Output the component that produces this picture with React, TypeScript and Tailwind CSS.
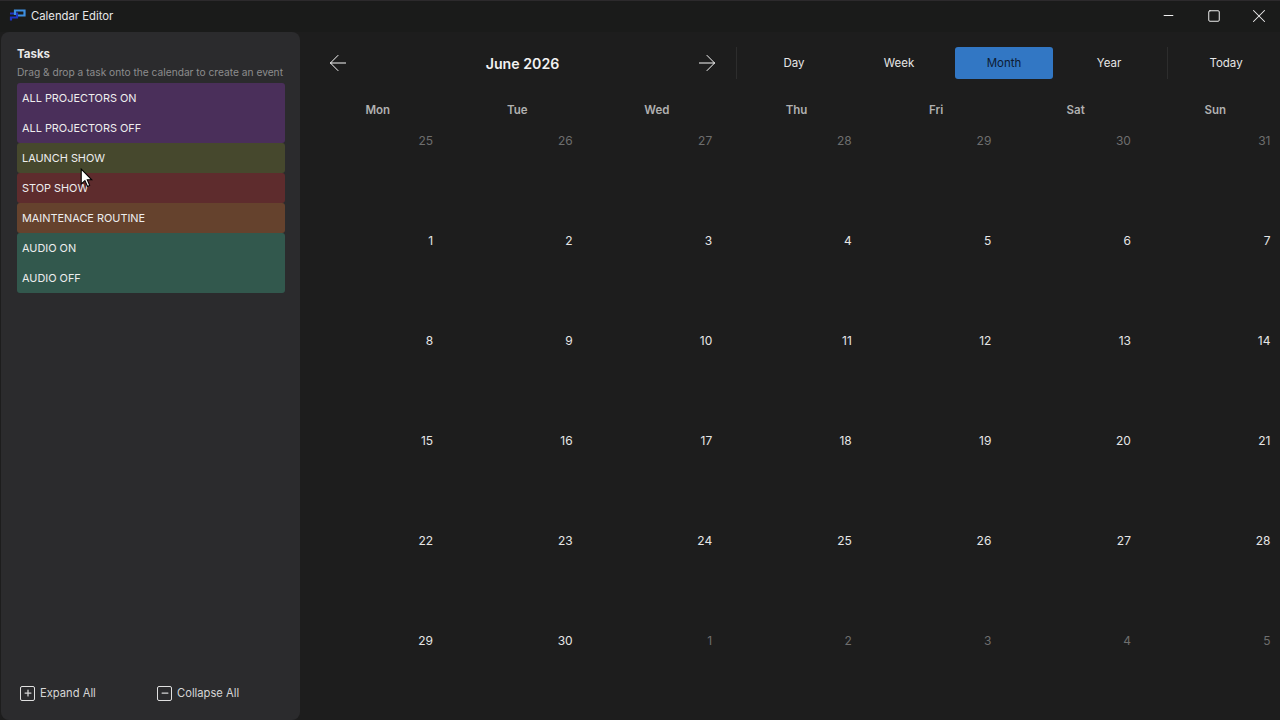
import { ArrowLeft, ArrowRight, Minus, Plus, Square, X } from "lucide-react";

const tasks = [
  { name: "ALL PROJECTORS ON", color: "bg-[#4a2f5a] rounded-t-[3px]" },
  { name: "ALL PROJECTORS OFF", color: "bg-[#4a2f5a] rounded-b-[3px]" },
  { name: "LAUNCH SHOW", color: "bg-[#46482d] rounded-[3px]" },
  { name: "STOP SHOW", color: "bg-[#5e2c2d] rounded-[3px]" },
  { name: "MAINTENACE ROUTINE", color: "bg-[#65422d] rounded-[3px]" },
  { name: "AUDIO ON", color: "bg-[#32584d] rounded-t-[3px]" },
  { name: "AUDIO OFF", color: "bg-[#32584d] rounded-b-[3px]" },
];

const days = ["Mon", "Tue", "Wed", "Thu", "Fri", "Sat", "Sun"];

const cells = [
  [25, 26, 27, 28, 29, 30, 31],
  [1, 2, 3, 4, 5, 6, 7],
  [8, 9, 10, 11, 12, 13, 14],
  [15, 16, 17, 18, 19, 20, 21],
  [22, 23, 24, 25, 26, 27, 28],
  [29, 30, 1, 2, 3, 4, 5],
];

function isOutside(row: number, date: number) {
  return row === 0 || (row === 5 && date < 25);
}

function ViewButton({ label, active }: { label: string; active?: boolean }) {
  return (
    <button
      className={
        active
          ? "w-[98px] h-8 pt-[1px] rounded-[3px] bg-[#3277c4] text-[11.5px] text-[#0d1b33]"
          : "w-[98px] h-8 pt-[1px] rounded-[3px] text-[11.5px] text-[#e6e6e6]"
      }
    >
      {label}
    </button>
  );
}

export default function App() {
  return (
    <div className="relative w-[1280px] h-[720px] overflow-hidden flex flex-col bg-[#1d1d1d] text-white font-['Inter',sans-serif]">
      {/* title bar */}
      <div className="h-8 shrink-0 flex items-center pl-[9px] bg-[#1a1b1a] border-t border-[#2c2a2c]">
        <svg width="17" height="12" viewBox="0 0 17 12" fill="none" className="mr-[5px] mb-[3px]">
          <path d="M1 4.5 H8 V8.5 H2 V11.5" stroke="#1f35c4" strokeWidth="2.2" />
          <path d="M6 6 V1.5 H15.5 V6.5 H9" stroke="#3d8fe0" strokeWidth="2.2" />
        </svg>
        <span className="text-[11.3px] text-[#e8e8e8] mb-[1px]">Calendar Editor</span>
        <div className="ml-auto flex items-center text-[#f0f0f0] mb-[2px]">
          <div className="w-[46px] flex justify-center">
            <Minus size={15} strokeWidth={1.6} />
          </div>
          <div className="w-[45px] flex justify-center mr-[1px]">
            <Square size={14} strokeWidth={1.7} />
          </div>
          <div className="w-[43px] flex justify-center">
            <X size={22} strokeWidth={1.1} />
          </div>
        </div>
      </div>

      <div className="flex-1 flex min-h-0">
        {/* tasks panel */}
        <aside className="w-[299px] ml-[1px] shrink-0 flex flex-col bg-[#2b2b2d] rounded-lg pl-[16px] pr-[15px]">
          <h2 className="mt-[14px] text-[11.5px] font-bold leading-4 text-[#e8e8e8]">Tasks</h2>
          <p className="mt-[2px] text-[10.2px] leading-4 text-[#8d8d8d] whitespace-nowrap">
            Drag &amp; drop a task onto the calendar to create an event
          </p>
          <div className="mt-[3px] flex flex-col">
            {tasks.map((task) => (
              <div key={task.name} className={`h-[30px] pt-[1px] flex items-center px-[5px] text-[10.9px] text-[#eeeeee] ${task.color}`}>
                {task.name}
              </div>
            ))}
          </div>
          <div className="mt-auto mb-[18px] ml-[3px] flex items-center text-[11.2px] text-[#d6d6d6]">
            <button className="w-[137px] flex items-center gap-[5px]">
              <span className="w-[15px] h-[15px] flex items-center justify-center rounded-[2px] border border-[#e0e0e0]">
                <Plus size={10} strokeWidth={3} />
              </span>
              <span className="pt-[1px]">Expand All</span>
            </button>
            <button className="flex items-center gap-[5px]">
              <span className="w-[15px] h-[15px] flex items-center justify-center rounded-[2px] border border-[#e0e0e0]">
                <Minus size={10} strokeWidth={3} />
              </span>
              <span className="pt-[1px]">Collapse All</span>
            </button>
          </div>
        </aside>

        {/* calendar */}
        <main className="flex-1 min-w-0 pl-[8px]">
          <div className="h-[62px] flex items-center">
            <button className="ml-[17px] text-white">
              <ArrowLeft size={26} strokeWidth={0.9} />
            </button>
            <div className="w-[343px] text-center text-[14.2px] font-semibold text-[#f2f2f2] mt-[1px]">June 2026</div>
            <button className="text-white">
              <ArrowRight size={26} strokeWidth={0.9} />
            </button>
            <div className="ml-[16px] h-8 w-px bg-[#2d2d2d]" />
            <div className="ml-[9px] flex gap-[7px] -translate-x-[1px]">
              <ViewButton label="Day" />
              <ViewButton label="Week" />
              <ViewButton label="Month" active />
              <ViewButton label="Year" />
            </div>
            <div className="ml-[8px] h-8 w-px bg-[#2d2d2d]" />
            <div className="ml-[9px]">
              <ViewButton label="Today" />
            </div>
          </div>

          <div className="w-[977px] grid grid-cols-7 h-[32px] pt-[1px] items-center">
            {days.map((day) => (
              <div key={day} className="text-center text-[11.5px] font-semibold text-[#b0b0b0]">
                {day}
              </div>
            ))}
          </div>

          <div className="w-[977px] grid grid-cols-7 auto-rows-[100px]">
            {cells.map((week, row) =>
              week.map((date, day) => (
                <div
                  key={`${row}-${day}`}
                  className={
                    isOutside(row, date)
                      ? "pt-[5px] pr-[14.5px] text-right text-[12px] leading-5 text-[#6e6e6e]"
                      : "pt-[5px] pr-[14.5px] text-right text-[12px] leading-5 text-[#e6e6e6]"
                  }
                >
                  {date}
                </div>
              ))
            )}
          </div>
        </main>
      </div>

      {/* mouse cursor in the capture */}
      <svg width="13" height="20" viewBox="0 0 12 19" className="absolute left-[80px] top-[168px]">
        <path d="M1 1 V15 L4.5 12 L7 17.5 L9 16.5 L6.7 11.2 H11 Z" fill="#fff" stroke="#000" strokeWidth="1" />
      </svg>
    </div>
  );
}
